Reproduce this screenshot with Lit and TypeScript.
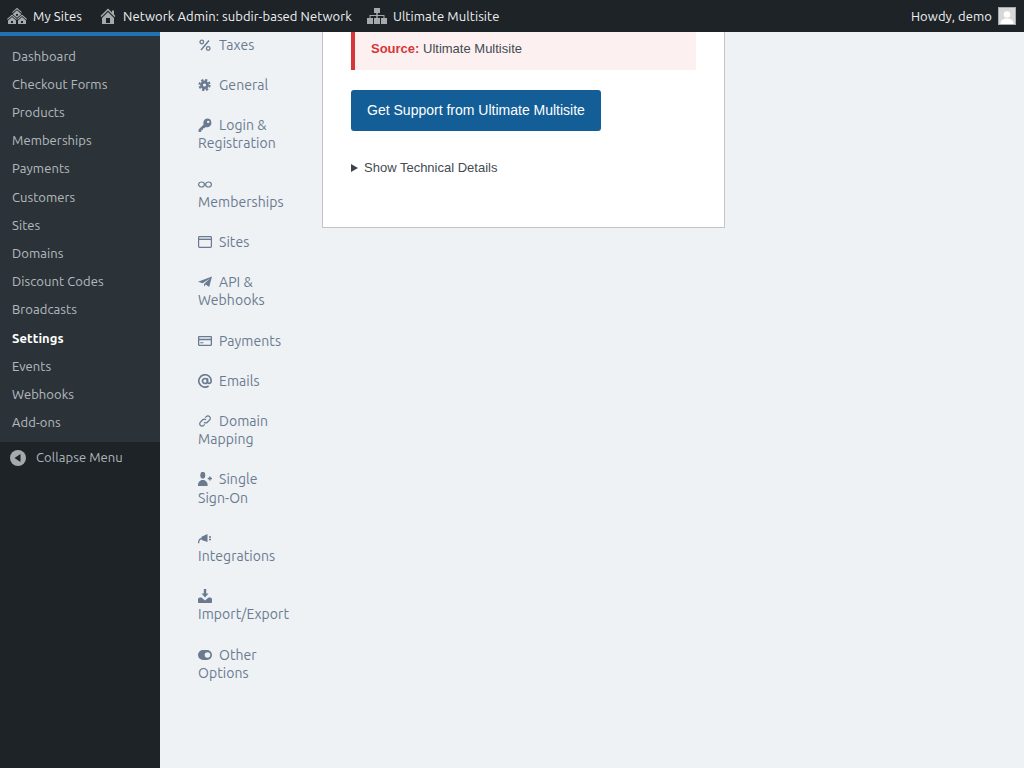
import { LitElement, html, css, svg } from "lit";
import { customElement } from "lit/decorators.js";

const menu = ["Dashboard","Checkout Forms","Products","Memberships","Payments","Customers","Sites","Domains","Discount Codes","Broadcasts","Settings","Events","Webhooks","Add-ons"];

const ic: Record<string, unknown> = {
  percent: svg`<circle cx="3.800" cy="4" r="1.800" fill="none" stroke="currentColor" stroke-width="1.300"/><circle cx="10.200" cy="10.500" r="1.800" fill="none" stroke="currentColor" stroke-width="1.300"/><path d="M11 2.500L3 12" stroke="currentColor" stroke-width="1.400"/>`,
  gear: svg`<circle cx="6.500" cy="7" r="3" fill="none" stroke="currentColor" stroke-width="2.800"/><circle cx="6.500" cy="7" r="5.100" fill="none" stroke="currentColor" stroke-width="2" stroke-dasharray="2.300 1.700"/>`,
  key: svg`<path d="M9.200 .6a4.300 4.300 0 0 1 4.200 4.300 4.300 4.300 0 0 1-4.300 4.300 4.300 4.300 0 0 1-1.400-.3L6.500 10.200H5v1.500H3.500V13.300l-1 .7H.6V11.600l5-5A4.300 4.300 0 0 1 9.200 .6zm1 2.100a1.200 1.200 0 1 0 0 2.400 1.200 1.200 0 0 0 0-2.400z" fill="currentColor" fill-rule="evenodd"/>`,
  inf: svg`<ellipse cx="3.500" cy="7.500" rx="2.900" ry="2.500" fill="none" stroke="currentColor" stroke-width="1.200"/><ellipse cx="10.500" cy="7.500" rx="2.900" ry="2.500" fill="none" stroke="currentColor" stroke-width="1.200"/>`,
  win: svg`<rect x=".6" y="1.600" width="12.800" height="10.800" rx=".8" fill="none" stroke="currentColor" stroke-width="1.200"/><path d="M.6 4.300h12.800" stroke="currentColor" stroke-width="1.400"/>`,
  plane: svg`<path d="M14 1.500L11.200 12 7.600 9.600 6 11.700V9L12 3.600 4.600 8.300 0 6.800z" fill="currentColor"/>`,
  card: svg`<path fill-rule="evenodd" d="M1.200 2h11.600c.7 0 1.200.5 1.200 1.200v7.600c0 .7-.5 1.200-1.200 1.200H1.200C.5 12 0 11.500 0 10.800V3.200C0 2.500.5 2 1.200 2zm.1 1.300v1.400h11.400V3.300zm0 3v4.400h11.400V6.300zM2.200 8.200h3.200v1.100H2.200z" fill="currentColor"/>`,
  at: svg`<circle cx="7" cy="7" r="2.500" fill="none" stroke="currentColor" stroke-width="1.700"/><path d="M9.500 4.300V8c0 2 3.700 2 3.700-1a6.200 6.200 0 1 0-2.600 5" fill="none" stroke="currentColor" stroke-width="1.600"/>`,
  link: svg`<path d="M6 8.200a2.300 2.300 0 0 0 3.300 0l2.300-2.300a2.300 2.300 0 0 0-3.300-3.300l-1 1M8 5.800a2.300 2.300 0 0 0-3.300 0L2.400 8.100a2.300 2.300 0 0 0 3.300 3.300l1-1" fill="none" stroke="currentColor" stroke-width="1.300"/>`,
  user: svg`<ellipse cx="4.800" cy="3.200" rx="2.500" ry="3.400" fill="currentColor"/><path d="M0 14v-1.500c0-2.500 1.800-3.500 3.500-4.500h2.600c1.700 1 3.500 2 3.500 4.500V14z" fill="currentColor"/><path d="M9.800 6.500h4.200M11.900 4.400v4.200" stroke="currentColor" stroke-width="1.400"/>`,
  plug: svg`<path d="M3.500 5.800L9.500 3v8L3.500 9z" fill="currentColor"/><path d="M.6 12.200c0-2.500 1.300-4.500 3.400-4.800" fill="none" stroke="currentColor" stroke-width="1.300"/><path d="M11 5.300h2v1.400h-2zM11 7.800h2v1.400h-2z" fill="currentColor"/>`,
  imp: svg`<path d="M5.800 0h2.400v4.500h2.300L7 8.500l-3.500-4h2.300z" fill="currentColor"/><path d="M0 10.500C0 9.500.6 8.500 1.800 8.500H3.500L7 11.500l3.500-3h1.700c1.200 0 1.800 1 1.800 2V13c0 .6-.4 1-1 1H1c-.6 0-1-.4-1-1z" fill="currentColor"/>`,
  tog: svg`<path fill-rule="evenodd" d="M5 2h4a5 5 0 0 1 0 10H5A5 5 0 0 1 5 2zm4.500 2.200a2.800 2.800 0 1 0 0 5.600 2.800 2.800 0 0 0 0-5.600z" fill="currentColor"/>`,
};

const nav: [string, string][] = [
  ["percent","Taxes"],["gear","General"],["key","Login & Registration"],["inf","Memberships"],["win","Sites"],
  ["plane","API & Webhooks"],["card","Payments"],["at","Emails"],["link","Domain Mapping"],["user","Single Sign-On"],
  ["plug","Integrations"],["imp","Import/Export"],["tog","Other Options"],
];

@customElement("app-root")
export class AppRoot extends LitElement {
  static styles = css`
    :host { display: block; height: 768px; overflow: hidden; background: #eef2f5; font-family: Ubuntu, "Noto Sans", sans-serif; font-size: 13px; letter-spacing: .08px; }
    .bar { height: 32px; background: #1d2327; color: #f0f0f1; display: flex; align-items: center; line-height: 32px; }
    .bar svg { display: block; fill: #a7aaad; flex: none; }
    .bi { display: flex; align-items: center; gap: 6px; }
    .i1 { margin-left: 7px; }
    .i2 { margin-left: 17px; }
    .i3 { margin-left: 15px; }
    .howdy { margin-left: auto; margin-right: 8px; display: flex; align-items: center; gap: 6px; }
    .av { width: 18px; height: 18px; display: block; }
    .layout { display: flex; height: 736px; }
    .side { width: 160px; flex: none; background: #1d2327; display: flex; flex-direction: column; }
    .strip { height: 4px; background: #2271b1; }
    .menu { list-style: none; margin: 0; padding: 5.500px 0; background: #2c3338; color: rgba(240,246,252,.7); }
    .menu li { padding: 5px 12px; line-height: 18.200px; }
    .menu li.cur { color: #fff; font-weight: 700; }
    .collapse { display: flex; align-items: center; color: rgba(240,246,252,.7); height: 32px; padding-left: 10px; gap: 10px; line-height: 18px; }
    .collapse span { position: relative; top: -1px; }
    .nav { list-style: none; margin: 0 0 0 38px; padding: 3.700px 0 0; width: 92px; flex: none; color: #6b7a90; font-size: 14px; line-height: 18.200px; letter-spacing: .06px; }
    .nav li { padding: 11px 0; }
    .nav li:first-child { padding-top: 0; }
    .nav svg { width: 14px; height: 14px; vertical-align: -2px; margin-right: 7px; }
    .card { margin-left: 32px; width: 403px; height: 196px; box-sizing: border-box; background: #fff; border: 1px solid #c3c4c7; border-top: 0; padding: 0 28px; font-family: "Liberation Sans", Arial, sans-serif; color: #444b52; letter-spacing: 0; }
    .notice { height: 38px; width: 345px; box-sizing: border-box; background: #fcf0f1; border-left: 4px solid #d63638; padding: 7.500px 0 0 16px; line-height: 18px; }
    .notice b { color: #d63638; }
    .btn { margin-top: 20px; width: 250px; height: 41px; box-sizing: border-box; padding-bottom: 1px; background: #135e96; color: #fff; border-radius: 3px; font-size: 14px; display: flex; align-items: center; justify-content: center; }
    .det { margin-top: 28px; display: flex; align-items: center; gap: 6px; line-height: 18px; }
    .tri { width: 0; height: 0; border-left: 7px solid #3c434a; border-top: 4.500px solid transparent; border-bottom: 4.500px solid transparent; }
  `;

  render() {
    return html`
      <div class="bar">
        <div class="bi i1">
          <svg width="20" height="20" viewBox="0 0 20 20"><path d="M14.27 6.87L10 3.14 5.73 6.87 5 6.14l5-4.38 5 4.38zM14 8.42l-4.05 3.43L6 8.38v-.74l4-3.5 4 3.5v.78zM11 9.7V8H9v1.7h2zm-1.73 4.03L5 10 .73 13.73 0 13l5-4.38L10 13zm10 0L15 10l-4.27 3.73L10 13l5-4.38L20 13zM5 11l4 3.5V18H1v-3.5zm10 0l4 3.5V18h-8v-3.5zM6 17v-2H4v2h2zm10 0v-2h-2v2h2z"/></svg>
          <span>My Sites</span>
        </div>
        <div class="bi i2">
          <svg width="18" height="20" viewBox="1 0 18 20"><path d="M16 8.5l1.53 1.53-1.06 1.06L10 4.62l-6.47 6.47-1.06-1.06L10 2.5l4 4v-2h2v4zm-6-2.46l6 5.99V18H4v-5.97zM12 17v-5H8v5h4z"/></svg>
          <span>Network Admin: subdir-based Network</span>
        </div>
        <div class="bi i3">
          <svg width="20" height="20" viewBox="0 0 20 20"><path d="M7 2h6v5h-2.300v2h6.800v3H20v6h-6v-6h2.500v-2h-5.800v2H13v6H7v-6h2.300v-2H3.500v2H6v6H0v-6h2.500V9h6.800V7H7z"/></svg>
          <span>Ultimate Multisite</span>
        </div>
        <div class="howdy">
          <span>Howdy, demo</span>
          <svg class="av" viewBox="0 0 18 18"><rect width="18" height="18" fill="#a7aaad"/><rect x="1" y="1" width="16" height="16" fill="#d8d8d8"/><circle cx="9" cy="7.500" r="3.300" fill="#fff"/><path d="M2.500 17c0-4 3-5.500 6.500-5.500s6.500 1.500 6.500 5.500z" fill="#fff"/></svg>
        </div>
      </div>
      <div class="layout">
        <div class="side">
          <div class="strip"></div>
          <ul class="menu">
            ${menu.map((m) => html`<li class=${m === "Settings" ? "cur" : ""}>${m}</li>`)}
          </ul>
          <div class="collapse">
            <svg width="16" height="16" viewBox="0 0 16 16"><circle cx="8" cy="8" r="8" fill="#a7aaad"/><path d="M10.500 4v8L4.500 8z" fill="#1d2327"/></svg>
            <span>Collapse Menu</span>
          </div>
        </div>
        <ul class="nav">
          ${nav.map(([i, t]) => html`<li><svg viewBox="0 0 14 14">${ic[i]}</svg>${t}</li>`)}
        </ul>
        <div class="card">
          <div class="notice"><b>Source:</b> Ultimate Multisite</div>
          <div class="btn">Get Support from Ultimate Multisite</div>
          <div class="det"><span class="tri"></span><span>Show Technical Details</span></div>
        </div>
      </div>
    `;
  }
}
